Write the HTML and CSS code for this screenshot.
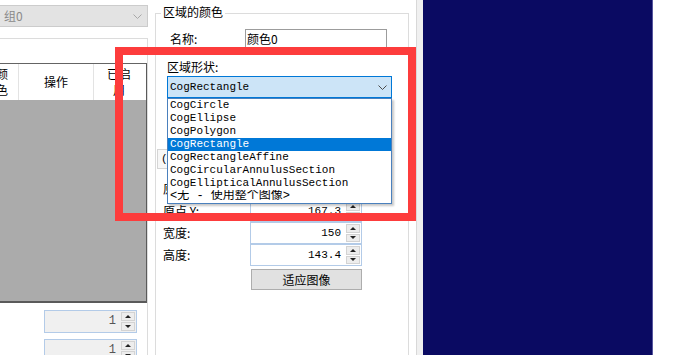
FILE: index.html
```html
<!DOCTYPE html>
<html lang="zh">
<head>
<meta charset="utf-8">
<title>区域的颜色</title>
<link rel="stylesheet" href="styles.css">
</head>
<body>
<div class="app">
  <div class="left">
    <div class="combo-dis">
      <span class="combo-dis-text">组0</span>
      <svg class="chev" width="9" height="5" viewBox="0 0 9 5"><path d="M0.5 0.5 L4.5 4.5 L8.5 0.5" fill="none" stroke="#a8a8a8" stroke-width="1"/></svg>
    </div>
    <div class="tabpage">
      <div class="grid">
        <div class="grid-head">
          <div class="th th-color">颜<br>色</div>
          <div class="th th-op">操作</div>
          <div class="th th-en">已启<br>用</div>
        </div>
        <div class="grid-body"></div>
      </div>
      <div class="spin spin-dis spin-left">
        <span class="spin-val">1</span>
        <div class="spin-btns"><span class="spin-btn up"></span><span class="spin-btn down"></span></div>
      </div>
      <div class="spin spin-dis spin-left spin-left2">
        <span class="spin-val">1</span>
        <div class="spin-btns"><span class="spin-btn up"></span><span class="spin-btn down"></span></div>
      </div>
    </div>
  </div>

  <div class="mid">
    <div class="group">
      <div class="group-title">区域的颜色</div>
      <div class="name-row">
        <span class="name-label">名称:</span>
        <div class="textbox">颜色0</div>
      </div>
      <div class="shape-label">区域形状:</div>
      <div class="combo-wrap">
        <div class="combo">
          <span class="combo-text">CogRectangle</span>
          <svg class="chev" width="9" height="5" viewBox="0 0 9 5"><path d="M0.5 0.5 L4.5 4.5 L8.5 0.5" fill="none" stroke="#4a4a4a" stroke-width="1"/></svg>
        </div>
        <ul class="dropdown">
          <li>CogCircle</li>
          <li>CogEllipse</li>
          <li>CogPolygon</li>
          <li class="sel">CogRectangle</li>
          <li>CogRectangleAffine</li>
          <li>CogCircularAnnulusSection</li>
          <li>CogEllipticalAnnulusSection</li>
          <li class="cjk">&lt;无 - 使用整个图像&gt;</li>
        </ul>
      </div>
      <div class="hidden-box">(0, 0)</div>
      <div class="row row-first">
        <span class="row-label">原点 X:</span>
        <div class="spin spin-r"><span class="spin-val">120.5</span><div class="spin-btns"><span class="spin-btn up"></span><span class="spin-btn down"></span></div></div>
      </div>
      <div class="row">
        <span class="row-label">原点 Y:</span>
        <div class="spin spin-r"><span class="spin-val">167.3</span><div class="spin-btns"><span class="spin-btn up"></span><span class="spin-btn down"></span></div></div>
      </div>
      <div class="row">
        <span class="row-label">宽度:</span>
        <div class="spin spin-r"><span class="spin-val">150</span><div class="spin-btns"><span class="spin-btn up"></span><span class="spin-btn down"></span></div></div>
      </div>
      <div class="row">
        <span class="row-label">高度:</span>
        <div class="spin spin-r"><span class="spin-val">143.4</span><div class="spin-btns"><span class="spin-btn up"></span><span class="spin-btn down"></span></div></div>
      </div>
      <div class="fit-btn">适应图像</div>
    </div>
  </div>

  <div class="strip"></div>
  <div class="display"></div>
  <div class="rest"></div>

  <div class="annot"></div>
</div>
</body>
</html>
```

FILE: styles.css
```css
* { box-sizing: border-box; }
html, body { margin: 0; padding: 0; background: #fff; }
body {
  font-family: "Noto Sans CJK SC", "Liberation Sans", sans-serif;
  font-size: 12px;
  color: #000;
  width: 693px;
  height: 355px;
  overflow: hidden;
}
.app {
  position: relative;
  display: flex;
  width: 693px;
  height: 355px;
  overflow: hidden;
}

/* ---------- left panel ---------- */
.left {
  flex: none;
  width: 155px;
  height: 355px;
  overflow: hidden;
}
.combo-dis {
  margin: 5px 0 0 -10px;
  width: 158px;
  height: 22px;
  background: #e3e3e3;
  border: 1px solid #cccccc;
  display: flex;
  align-items: center;
  padding-left: 13px;
  padding-right: 5px;
}
.combo-dis-text {
  flex: 1;
  color: #8a8a8a;
  line-height: 14px;
}

.tabpage {
  margin: 11px 0 0 -14px;
  width: 162px;
  height: 320px;
  border-top: 1px solid #dcdcdc;
  border-right: 1px solid #dcdcdc;
}
.grid {
  margin-top: 24px;
  width: 161px;
  border-top: 1px solid #646464;
  border-right: 1px solid #5a5a5a;
  border-bottom: 2px solid #5a5a5a;
}
.grid-head {
  display: flex;
  height: 36px;
  background: #fff;
}
.th {
  display: flex;
  align-items: center;
  justify-content: center;
  text-align: center;
  line-height: 16px;
  border-right: 1px solid #e3e3e3;
}
.th-color { width: 33px; }
.th-op { width: 75px; }
.th-en { flex: 1; border-right: none; padding-right: 2px; }
.grid-body {
  height: 201px;
  background: #ababab;
}

/* spin boxes */
.spin {
  display: flex;
  align-items: stretch;
  border: 1px solid #b3cbe8;
  background: #fff;
}
.spin-val {
  flex: 1;
  text-align: right;
  font-family: "Liberation Mono", monospace;
  font-size: 11px;
  line-height: 20px;
  padding-right: 5px;
  white-space: nowrap;
  overflow: hidden;
}
.spin-btns {
  flex: none;
  width: 14px;
  margin: 1px 1px 1px 0;
  display: flex;
  flex-direction: column;
  gap: 1px;
}
.spin-btn {
  flex: 1;
  display: flex;
  align-items: center;
  justify-content: center;
  background: #ededed;
  border: 1px solid #d3d3d3;
}
.spin-btn::before {
  content: "";
  width: 0;
  height: 0;
  border-left: 3px solid transparent;
  border-right: 3px solid transparent;
}
.up::before { border-bottom: 3px solid #222; }
.down::before { border-top: 3px solid #222; }

.spin-dis { background: #f0f0f0; }
.spin-left {
  margin: 7px 0 0 58px;
  width: 93px;
  height: 23px;
}
.spin-left2 { margin-top: 6px; }
.spin-left .spin-val { color: #555; font-size: 12px; line-height: 21px; }

/* ---------- middle group ---------- */
.mid {
  flex: none;
  width: 261px;
  height: 355px;
}
.group {
  margin-top: 13px;
  width: 254px;
  height: 360px;
  border: 1px solid #dcdcdc;
  border-bottom: none;
}
.group-title {
  margin: -9px 0 0 5px;
  padding: 0 2px;
  width: fit-content;
  background: #fff;
  line-height: 14px;
}
.name-row {
  display: flex;
  align-items: center;
  margin-top: 10px;
  height: 19px;
}
.name-label {
  margin-left: 14px;
  width: 75px;
  line-height: 14px;
}
.textbox {
  width: 142px;
  height: 19px;
  border: 1px solid #9c9c9c;
  padding-left: 1px;
  line-height: 17px;
  background: #fff;
}
.shape-label {
  margin: 12px 0 0 11px;
  line-height: 14px;
}
.combo-wrap {
  position: relative;
  margin: 2px 0 0 11px;
  width: 225px;
  height: 22px;
}
.combo {
  height: 22px;
  background: #cce4f7;
  border: 1px solid #0078d7;
  display: flex;
  align-items: center;
  padding: 0 4px 0 2px;
}
.combo-text {
  flex: 1;
  font-family: "Liberation Mono", monospace;
  font-size: 11px;
  line-height: 14px;
}
.dropdown {
  position: absolute;
  z-index: 5;
  left: 0;
  top: 100%;
  width: 225px;
  margin: 0;
  padding: 0;
  list-style: none;
  background: #fff;
  border: 1px solid #4a80bd;
  box-shadow: 2px 2px 2px rgba(0, 0, 0, 0.22);
}
.dropdown li {
  height: 13px;
  line-height: 13px;
  padding-left: 2px;
  font-family: "Liberation Mono", monospace;
  font-size: 11px;
  white-space: nowrap;
}
.dropdown li.sel {
  background: #0078d7;
  color: #fff;
}
.dropdown li.cjk {
  font-family: "Liberation Mono", "Noto Sans CJK SC", monospace;
  font-size: 12px;
  overflow: hidden;
}
.hidden-box {
  margin: 51px 0 0 1px;
  width: 120px;
  height: 20px;
  border: 1px solid #d5d5d5;
  background: #f7f7f7;
  padding-left: 3px;
  line-height: 18px;
  font-family: "Liberation Mono", monospace;
  font-size: 11px;
}
.row {
  display: flex;
  align-items: center;
  height: 22px;
}
.row-first { margin-top: 9px; }
.row-label {
  margin-left: 7px;
  width: 87px;
  line-height: 14px;
}
.spin-r {
  width: 112px;
  height: 22px;
}
.fit-btn {
  margin: 3px 0 0 95px;
  width: 111px;
  height: 21px;
  background: #e1e1e1;
  border: 1px solid #adadad;
  text-align: center;
  line-height: 19px;
}

/* ---------- right side ---------- */
.strip {
  flex: none;
  width: 7px;
  height: 355px;
  background: #f0f0f0;
  border-left: 1px solid #d8d8d8;
}
.display {
  flex: none;
  width: 230px;
  height: 355px;
  background: #0a0a62;
  border-right: 1px solid #55559e;
}
.rest {
  flex: 1;
  background: #fff;
}

/* red annotation rectangle */
.annot {
  position: absolute;
  z-index: 10;
  left: 115px;
  top: 47px;
  width: 301px;
  height: 174px;
  border: 8px solid #fd3c3c;
}
```
